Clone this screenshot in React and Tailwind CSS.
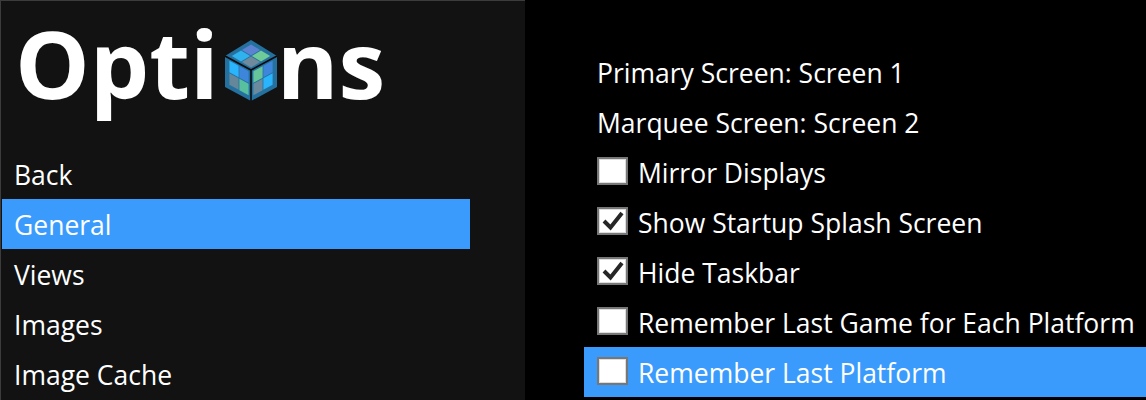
import React from 'react';

const navItems = ['Back', 'General', 'Views', 'Images', 'Image Cache'];

const settings = [
  { label: 'Primary Screen: Screen 1' },
  { label: 'Marquee Screen: Screen 2' },
  { label: 'Mirror Displays', box: true },
  { label: 'Show Startup Splash Screen', box: true, checked: true },
  { label: 'Hide Taskbar', box: true, checked: true },
  { label: 'Remember Last Game for Each Platform', box: true },
  { label: 'Remember Last Platform', box: true, active: true },
];

// one 2x2 face of the cube, from an origin corner and two edge vectors
const faceTiles = (o, u, v, colors) =>
  colors.map((color, i) => {
    const col = i % 2;
    const row = i > 1 ? 1 : 0;
    const at = (a, b) => {
      const x = o[0] + u[0] * (col + a) / 2 + v[0] * (row + b) / 2;
      const y = o[1] + u[1] * (col + a) / 2 + v[1] * (row + b) / 2;
      return `${x.toFixed(1)},${y.toFixed(1)}`;
    };
    const m = 0.04;
    return <polygon key={i} fill={color} points={[at(m, m), at(1 - m, m), at(1 - m, 1 - m), at(m, 1 - m)].join(' ')} />;
  });

const CubeLogo = () => (
  <svg width="52" height="61" viewBox="0 0 52 61" className="inline-block ml-[6px] align-[-2px]">
    <polygon points="26,0 52,16 52,47 26,61 0,47 0,16" fill="#24719f" />
    {faceTiles([26, 4], [20, 12], [-20, 12], ['#5c82d2', '#6fcb98', '#2fb2ee', '#6e8a9c'])}
    {faceTiles([4, 20], [20, 11], [0, 25], ['#2ab4fb', '#3d86dc', '#66869a', '#58c09e'])}
    {faceTiles([28, 31], [20, -11], [0, 25], ['#66c69a', '#3d86dc', '#6b8a9e', '#2ab4fb'])}
    <path d="M0 16 L26 30 L52 16 M26 30 L26 61" fill="none" stroke="#0a0a0a" strokeWidth="1.6" />
  </svg>
);

const CheckBox = ({ checked }) => (
  <span className="w-[31px] h-[28px] shrink-0 border-2 border-[#777777] bg-white shadow-[inset_0_0_0_1px_#dddddd] flex items-center justify-center mb-[2px]">
    {checked && (
      <svg width="24" height="22" viewBox="0 0 24 22">
        <path d="M3 11 L9.5 17.5 L21 3" fill="none" stroke="#262626" strokeWidth="4" />
      </svg>
    )}
  </span>
);

export default function App() {
  return (
    <div className="w-[1146px] h-[400px] overflow-hidden flex bg-black text-white text-[26.5px] font-['Open_Sans',sans-serif]">
      <aside className="w-[525px] h-full bg-[#121212] border-l border-t border-[#3c3c3c] pl-px">
        <div className="h-[148px] pl-[13px]">
          <h1 className="text-[94px] leading-[125px] font-bold whitespace-nowrap">
            Opti
            <CubeLogo />
            ns
          </h1>
        </div>
        <nav className="w-[468px]">
          {navItems.map((item) => (
            <div key={item} className={`h-[50px] flex items-center pl-[12px] pt-[3px] ${item === 'General' ? 'bg-[#3a9bfd]' : ''}`}>
              {item}
            </div>
          ))}
        </nav>
      </aside>
      <main className="flex-1 pt-[47px] pl-[59px]">
        {settings.map((row) => (
          <div
            key={row.label}
            className={`h-[50px] flex items-center gap-[10px] pl-[13px] ${row.active ? 'bg-[#3a9bfd]' : ''}`}
          >
            {row.box && <CheckBox checked={row.checked} />}
            <span className="whitespace-nowrap pt-[4px]">{row.label}</span>
          </div>
        ))}
      </main>
    </div>
  );
}
